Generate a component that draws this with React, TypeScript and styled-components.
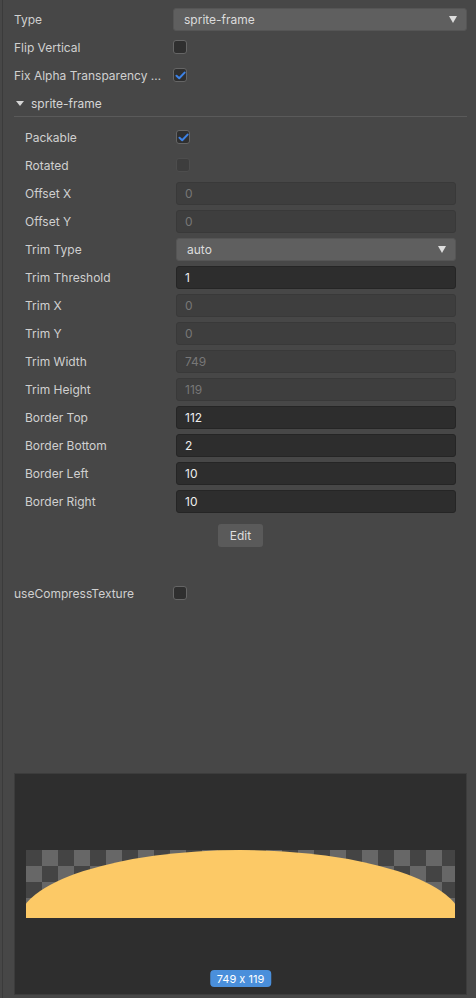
import styled, { createGlobalStyle } from 'styled-components';

const GlobalStyle = createGlobalStyle`
   html, body {
      margin: 0;
      padding: 0;
      background: #474747;
   }
   * {
      box-sizing: border-box;
   }
`;

const Page = styled.div`
   min-height: 998px;
   display: flex;
   flex-direction: column;
   padding: 5px 9px 4px 11px;
   border-left: 1px solid #3b3b3b;
   margin-left: 2px;
   background: #474747;
   font-family: Inter, 'Noto Sans', 'Liberation Sans', sans-serif;
   font-size: 12px;
   font-feature-settings: 'calt' 0;
   color: #d2d2d2;
`;

const Row = styled.div`
   display: flex;
   align-items: center;
   height: 28px;
`;

const Label = styled.div<{ $width: number }>`
   width: ${(p) => p.$width}px;
   flex: none;
   padding-right: 6px;
   white-space: nowrap;
   overflow: hidden;
   text-overflow: ellipsis;
   color: #d0d0d0;
`;

const Control = styled.div`
   flex: 1;
   min-width: 0;
   display: flex;
   align-items: center;
`;

const Select = styled.div`
   flex: 1;
   height: 23px;
   display: flex;
   align-items: center;
   justify-content: space-between;
   padding: 0 9px 0 10px;
   background: #5f5f5f;
   border: 1px solid #555;
   border-radius: 3px;
   color: #dcdcdc;
`;

const Arrow = styled.span`
   width: 0;
   height: 0;
   border-left: 4px solid transparent;
   border-right: 4px solid transparent;
   border-top: 7px solid #dedede;
`;

const Input = styled.div<{ $disabled?: boolean }>`
   flex: 1;
   height: 23px;
   display: flex;
   align-items: center;
   padding: 0 8px;
   border-radius: 3px;
   background: ${(p) => (p.$disabled ? '#3e3e3e' : '#2d2d2d')};
   border: 1px solid ${(p) => (p.$disabled ? '#393939' : '#252525')};
   color: ${(p) => (p.$disabled ? '#777' : '#eeeeee')};
`;

const Box = styled.div<{ $disabled?: boolean }>`
   width: 14px;
   height: 14px;
   border-radius: 3px;
   display: flex;
   align-items: center;
   justify-content: center;
   background: ${(p) => (p.$disabled ? '#3d3d3d' : '#2f2f2f')};
   border: 1px solid ${(p) => (p.$disabled ? '#4d4d4d' : '#656565')};
`;

const SectionHeader = styled.div`
   display: flex;
   align-items: center;
   gap: 7px;
   height: 28px;
   padding: 1px 0 0 2px;
   border-bottom: 1px solid #5a5a5a;
   color: #d6d6d6;
`;

const Caret = styled.span`
   width: 0;
   height: 0;
   border-left: 4px solid transparent;
   border-right: 4px solid transparent;
   border-top: 5px solid #d6d6d6;
`;

const Section = styled.div`
   display: flex;
   flex-direction: column;
   padding: 6px 11px 0 11px;
`;

const ButtonRow = styled.div`
   display: flex;
   justify-content: center;
   padding-top: 9px;
`;

const Button = styled.div`
   width: 45px;
   height: 23px;
   display: flex;
   align-items: center;
   justify-content: center;
   border-radius: 3px;
   background: #5a5a5a;
   color: #dedede;
`;

const Spacer = styled.div`
   height: 32px;
`;

const Preview = styled.div`
   position: relative;
   margin-top: auto;
   margin-bottom: -1px;
   width: 453px;
   height: 222px;
   background: #2e2e2e;
   border: 1px solid #3c3c3c;
   display: flex;
   align-items: center;
   padding-left: 11px;
`;

const Sprite = styled.div`
   width: 429px;
   height: 68px;
   background-color: #444;
   background-image: linear-gradient(45deg, #676767 25%, transparent 25%, transparent 75%, #676767 75%),
      linear-gradient(45deg, #676767 25%, transparent 25%, transparent 75%, #676767 75%);
   background-size: 32px 32px;
   background-position: 0 0, 16px 16px;
   display: flex;
`;

const Badge = styled.div`
   position: absolute;
   left: 50%;
   bottom: 7px;
   transform: translateX(-50%);
   height: 17px;
   padding: 0 7px;
   display: flex;
   align-items: center;
   border-radius: 4px;
   background: #4a8fdb;
   color: #ffffff;
   font-size: 11px;
   white-space: nowrap;
`;

const Check = ({ checked, disabled }: { checked?: boolean; disabled?: boolean }) => (
   <Box $disabled={disabled}>
      {checked && (
         <svg width="11" height="9" viewBox="0 0 11 9">
            <path d="M1.5 4.8 L4.2 7.3 L9.6 1.6" fill="none" stroke="#3d82e6" strokeWidth="2" strokeLinecap="round" strokeLinejoin="round" />
         </svg>
      )}
   </Box>
);

interface IField {
   label: string;
   kind: 'check' | 'input' | 'select';
   value?: string;
   checked?: boolean;
   disabled?: boolean;
}

const fields: IField[] = [
   { label: 'Packable', kind: 'check', checked: true },
   { label: 'Rotated', kind: 'check', disabled: true },
   { label: 'Offset X', kind: 'input', value: '0', disabled: true },
   { label: 'Offset Y', kind: 'input', value: '0', disabled: true },
   { label: 'Trim Type', kind: 'select', value: 'auto' },
   { label: 'Trim Threshold', kind: 'input', value: '1' },
   { label: 'Trim X', kind: 'input', value: '0', disabled: true },
   { label: 'Trim Y', kind: 'input', value: '0', disabled: true },
   { label: 'Trim Width', kind: 'input', value: '749', disabled: true },
   { label: 'Trim Height', kind: 'input', value: '119', disabled: true },
   { label: 'Border Top', kind: 'input', value: '112' },
   { label: 'Border Bottom', kind: 'input', value: '2' },
   { label: 'Border Left', kind: 'input', value: '10' },
   { label: 'Border Right', kind: 'input', value: '10' },
];

const renderControl = (f: IField) => {
   if (f.kind === 'check') return <Check checked={f.checked} disabled={f.disabled} />;
   if (f.kind === 'select')
      return (
         <Select>
            {f.value}
            <Arrow />
         </Select>
      );
   return <Input $disabled={f.disabled}>{f.value}</Input>;
};

const App = () => {
   return (
      <>
         <GlobalStyle />
         <Page>
            <Row>
               <Label $width={159}>Type</Label>
               <Control>
                  <Select>
                     sprite-frame
                     <Arrow />
                  </Select>
               </Control>
            </Row>
            <Row>
               <Label $width={159}>Flip Vertical</Label>
               <Control>
                  <Check />
               </Control>
            </Row>
            <Row>
               <Label $width={159}>Fix Alpha Transparency Artifacts</Label>
               <Control>
                  <Check checked />
               </Control>
            </Row>
            <SectionHeader>
               <Caret />
               sprite-frame
            </SectionHeader>
            <Section>
               {fields.map((f) => (
                  <Row key={f.label}>
                     <Label $width={151}>{f.label}</Label>
                     <Control>{renderControl(f)}</Control>
                  </Row>
               ))}
               <ButtonRow>
                  <Button>Edit</Button>
               </ButtonRow>
            </Section>
            <Spacer />
            <Row>
               <Label $width={159}>useCompressTexture</Label>
               <Control>
                  <Check />
               </Control>
            </Row>
            <Preview>
               <Sprite>
                  <svg width="429" height="68" viewBox="0 0 429 68">
                     <ellipse cx="214.5" cy="72" rx="222" ry="72" fill="#fcc966" />
                  </svg>
               </Sprite>
               <Badge>749 x 119</Badge>
            </Preview>
         </Page>
      </>
   );
};

export default App;
